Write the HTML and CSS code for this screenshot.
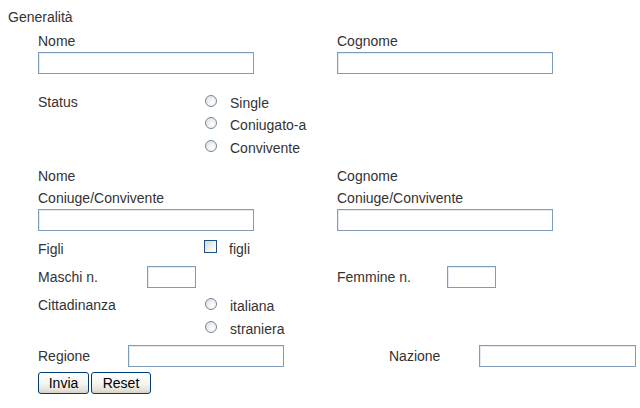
FILE: index.html
```html
<!DOCTYPE html>
<html lang="it">
<head>
<meta charset="utf-8">
<title>Generalità</title>
<link rel="stylesheet" href="styles.css">
</head>
<body>
<form class="form">
  <div class="title">Generalità</div>
  <div class="body">
    <div class="pair names">
      <div class="field half"><label class="lbl">Nome</label><input class="txt wide" type="text"></div>
      <div class="field half"><label class="lbl">Cognome</label><input class="txt wide" type="text"></div>
    </div>

    <div class="row status">
      <div class="lbl col-opt">Status</div>
      <div class="options">
        <label class="opt"><input class="radio" type="radio" name="status"><span>Single</span></label>
        <label class="opt"><input class="radio" type="radio" name="status"><span>Coniugato-a</span></label>
        <label class="opt"><input class="radio" type="radio" name="status"><span>Convivente</span></label>
      </div>
    </div>

    <div class="pair names2">
      <div class="field half"><label class="lbl">Nome<br>Coniuge/Convivente</label><input class="txt wide" type="text"></div>
      <div class="field half"><label class="lbl">Cognome<br>Coniuge/Convivente</label><input class="txt wide" type="text"></div>
    </div>

    <div class="row figli">
      <div class="lbl col-opt">Figli</div>
      <label class="chk-opt"><input class="check" type="checkbox"><span>figli</span></label>
    </div>

    <div class="pair counts">
      <div class="half inline"><span class="lbl w-maschi">Maschi n.</span><input class="txt small" type="text"></div>
      <div class="half inline"><span class="lbl w-femmine">Femmine n.</span><input class="txt small" type="text"></div>
    </div>

    <div class="row citt">
      <div class="lbl col-opt">Cittadinanza</div>
      <div class="options">
        <label class="opt opt-tall"><input class="radio" type="radio" name="citt"><span>italiana</span></label>
        <label class="opt opt-tall"><input class="radio" type="radio" name="citt"><span>straniera</span></label>
      </div>
    </div>

    <div class="row place">
      <span class="lbl w-regione">Regione</span><input class="txt medium" type="text">
      <span class="lbl w-nazione">Nazione</span><input class="txt medium2" type="text">
    </div>

    <div class="buttons">
      <button class="btn btn-invia" type="submit">Invia</button>
      <button class="btn btn-reset" type="reset">Reset</button>
    </div>
  </div>
</form>
</body>
</html>
```
FILE: styles.css
```css
html, body {
  margin: 0;
  padding: 0;
  background: #ffffff;
}

body {
  font-family: "Liberation Sans", Arial, sans-serif;
  font-size: 14px;
  line-height: 22px;
  color: #333333;
}

.form {
  margin: 0;
  padding: 6px 0 0 8px;
}

.title {
  height: 22px;
}

.body {
  padding-left: 30px;
  display: flex;
  flex-direction: column;
}

.pair,
.row {
  display: flex;
}

.half {
  width: 299px;
  flex: none;
}

.field {
  display: flex;
  flex-direction: column;
}

.lbl {
  display: block;
  flex: none;
}

.names { margin-top: 2px; }
.status { margin-top: 16.5px; }
.names2 { margin-top: 6px; }
.figli { margin-top: 6.5px; height: 22px; }
.counts { margin-top: 6px; }
.citt { margin-top: 6.5px; }
.place { margin-top: 3px; }
.buttons { margin-top: 5px; display: flex; gap: 2px; }

.txt {
  box-sizing: border-box;
  display: block;
  height: 22px;
  margin: 0;
  padding: 1px 3px;
  border: 1px solid #7f9db9;
  box-shadow: inset 1px 1px 0 #e3eaf1;
  background: #ffffff;
  font: inherit;
  color: #000;
  flex: none;
}

.wide { width: 216px; }
.small { width: 49px; }
.medium { width: 156px; }
.medium2 { width: 157px; }

.col-opt { width: 166px; }

.options {
  display: flex;
  flex-direction: column;
  padding-top: 1px;
}

.opt {
  display: flex;
  align-items: flex-start;
  height: 22.5px;
}

.opt-tall { height: 23.3px; }

.radio {
  -webkit-appearance: none;
  appearance: none;
  box-sizing: border-box;
  width: 12px;
  height: 12px;
  margin: 3px 13px 0 1px;
  border: 1px solid #748799;
  border-radius: 50%;
  background: radial-gradient(circle at 65% 65%, #ffffff 0%, #f1f2f3 40%, #d5d9de 100%);
  flex: none;
}

.chk-opt {
  display: flex;
  align-items: flex-start;
}

.check {
  -webkit-appearance: none;
  appearance: none;
  box-sizing: border-box;
  width: 13px;
  height: 13px;
  margin: 2.2px 12px 0 0;
  border: 1px solid #1c5180;
  background: linear-gradient(135deg, #d6d6cf 0%, #eeeeea 50%, #ffffff 100%);
  flex: none;
}

.inline {
  display: flex;
  align-items: flex-start;
}

.w-maschi { width: 109px; }
.w-femmine { width: 110px; }
.w-regione { width: 90px; }
.w-nazione { width: 90px; margin-left: 105px; }

.btn {
  box-sizing: border-box;
  height: 22px;
  margin: 0;
  padding: 0;
  border: 1px solid #003c74;
  border-radius: 3px;
  background: linear-gradient(#ffffff 0%, #f4f4f0 55%, #e3e2da 85%, #d6d0c5 100%);
  font-family: "Liberation Sans", Arial, sans-serif;
  font-size: 14px;
  line-height: 20px;
  color: #000000;
}

.btn-invia { width: 51px; }
.btn-reset { width: 60px; }
```
